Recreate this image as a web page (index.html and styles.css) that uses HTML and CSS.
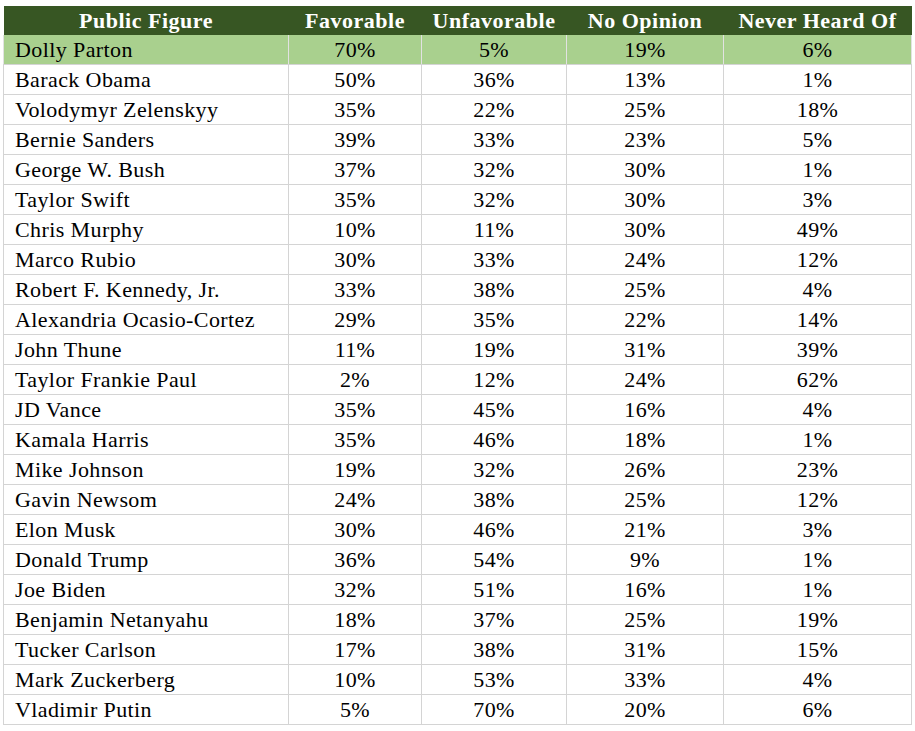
FILE: index.html
```html
<!DOCTYPE html>
<html>
<head>
<meta charset="utf-8">
<link rel="stylesheet" href="styles.css">
</head>
<body>
<table class="fav">
  <colgroup>
    <col class="c-name"><col class="c-fav"><col class="c-unfav"><col class="c-noop"><col class="c-never">
  </colgroup>
  <thead>
    <tr><th>Public Figure</th><th>Favorable</th><th>Unfavorable</th><th>No Opinion</th><th>Never Heard Of</th></tr>
  </thead>
  <tbody>
    <tr class="top"><td>Dolly Parton</td><td>70%</td><td>5%</td><td>19%</td><td>6%</td></tr>
    <tr><td>Barack Obama</td><td>50%</td><td>36%</td><td>13%</td><td>1%</td></tr>
    <tr><td>Volodymyr Zelenskyy</td><td>35%</td><td>22%</td><td>25%</td><td>18%</td></tr>
    <tr><td>Bernie Sanders</td><td>39%</td><td>33%</td><td>23%</td><td>5%</td></tr>
    <tr><td>George W. Bush</td><td>37%</td><td>32%</td><td>30%</td><td>1%</td></tr>
    <tr><td>Taylor Swift</td><td>35%</td><td>32%</td><td>30%</td><td>3%</td></tr>
    <tr><td>Chris Murphy</td><td>10%</td><td>11%</td><td>30%</td><td>49%</td></tr>
    <tr><td>Marco Rubio</td><td>30%</td><td>33%</td><td>24%</td><td>12%</td></tr>
    <tr><td>Robert F. Kennedy, Jr.</td><td>33%</td><td>38%</td><td>25%</td><td>4%</td></tr>
    <tr><td>Alexandria Ocasio-Cortez</td><td>29%</td><td>35%</td><td>22%</td><td>14%</td></tr>
    <tr><td>John Thune</td><td>11%</td><td>19%</td><td>31%</td><td>39%</td></tr>
    <tr><td>Taylor Frankie Paul</td><td>2%</td><td>12%</td><td>24%</td><td>62%</td></tr>
    <tr><td>JD Vance</td><td>35%</td><td>45%</td><td>16%</td><td>4%</td></tr>
    <tr><td>Kamala Harris</td><td>35%</td><td>46%</td><td>18%</td><td>1%</td></tr>
    <tr><td>Mike Johnson</td><td>19%</td><td>32%</td><td>26%</td><td>23%</td></tr>
    <tr><td>Gavin Newsom</td><td>24%</td><td>38%</td><td>25%</td><td>12%</td></tr>
    <tr><td>Elon Musk</td><td>30%</td><td>46%</td><td>21%</td><td>3%</td></tr>
    <tr><td>Donald Trump</td><td>36%</td><td>54%</td><td>9%</td><td>1%</td></tr>
    <tr><td>Joe Biden</td><td>32%</td><td>51%</td><td>16%</td><td>1%</td></tr>
    <tr><td>Benjamin Netanyahu</td><td>18%</td><td>37%</td><td>25%</td><td>19%</td></tr>
    <tr><td>Tucker Carlson</td><td>17%</td><td>38%</td><td>31%</td><td>15%</td></tr>
    <tr><td>Mark Zuckerberg</td><td>10%</td><td>53%</td><td>33%</td><td>4%</td></tr>
    <tr><td>Vladimir Putin</td><td>5%</td><td>70%</td><td>20%</td><td>6%</td></tr>
  </tbody>
</table>
</body>
</html>
```
FILE: styles.css
```css
html, body {
  margin: 0;
  padding: 0;
  background: #ffffff;
}
body {
  padding: 6px 0 0 3px;
  font-family: "Liberation Serif", "Times New Roman", serif;
}
.fav {
  border-collapse: collapse;
  table-layout: fixed;
  width: 908px;
  font-size: 22px;
  letter-spacing: 0.4px;
  color: #000;
}
.c-name { width: 285px; }
.c-fav { width: 133px; }
.c-unfav { width: 145px; }
.c-noop { width: 157px; }
.c-never { width: 188px; }
.fav th {
  background: #375623;
  color: #ffffff;
  font-weight: bold;
  letter-spacing: 0.5px;
  text-align: center;
  height: 29px;
  line-height: 29px;
  padding: 0;
  white-space: nowrap;
  border: none;
}
.fav td {
  height: 29px;
  line-height: 29px;
  padding: 0;
  text-align: center;
  border: 1px solid #d4d4d4;
  white-space: nowrap;
}
.fav td:first-child {
  text-align: left;
  padding-left: 11px;
}
.fav tr.top td {
  background: #a9d08e;
  border-top: none;
  border-left-color: #e2e2e2;
  border-right-color: #e2e2e2;
}
```
